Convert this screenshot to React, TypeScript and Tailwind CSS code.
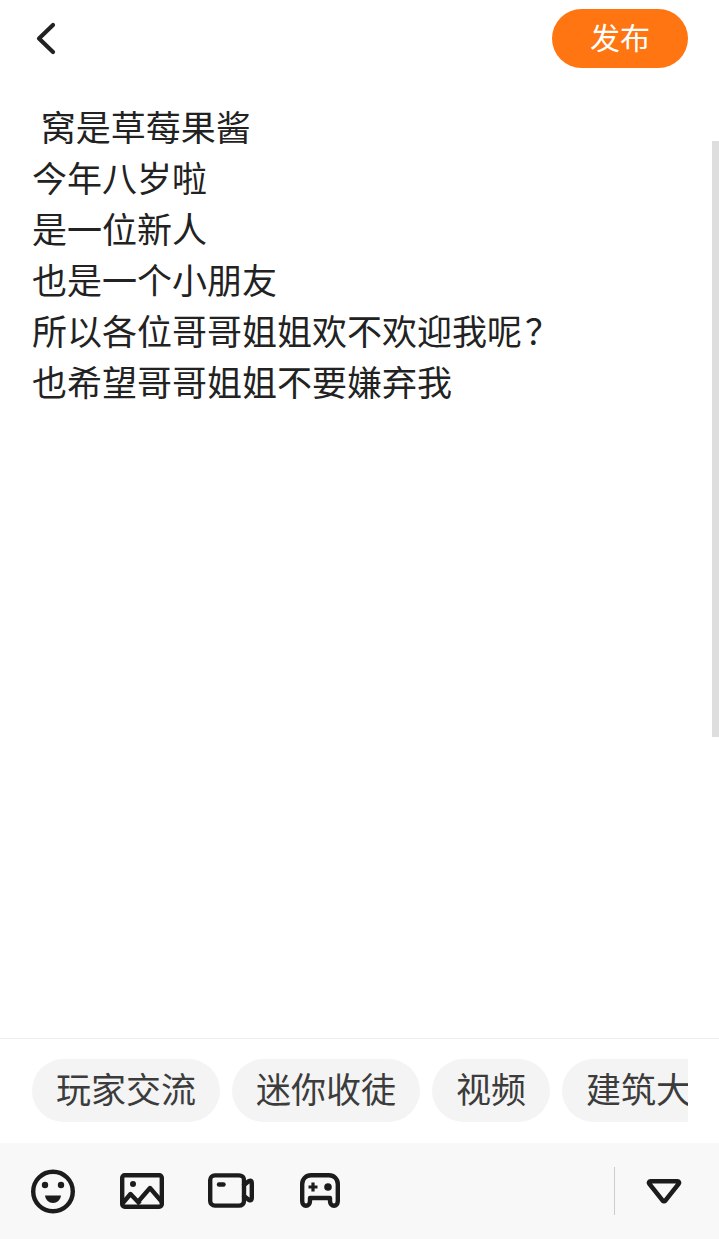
const font = "font-['Roboto','Noto_Sans_CJK_SC',sans-serif]";

const lines = ['\u00a0窝是草莓果酱', '今年八岁啦', '是一位新人', '也是一个小朋友', '所以各位哥哥姐姐欢不欢迎我呢', '也希望哥哥姐姐不要嫌弃我'];
const tags = ['玩家交流', '迷你收徒', '视频', '建筑大师'];

export default function App() {
  return (
    <div className={`relative flex h-[1239px] w-[719px] flex-col overflow-hidden bg-white ${font}`}>
      {/* header */}
      <div className="flex h-[77px] shrink-0 items-start justify-between pl-[32px] pr-[31px] pt-[9px]">
        <svg className="mt-[12px]" width="28" height="36" viewBox="0 0 28 36" fill="none" stroke="#222" strokeWidth="4.2" strokeLinecap="round" strokeLinejoin="round">
          <path d="M21 4L7 17.5L21 31" />
        </svg>
        <button className="flex h-[59px] w-[136px] items-center justify-center rounded-full bg-[#ff7512] text-[30px] text-white">发布</button>
      </div>

      {/* text */}
      <div className="flex-1 px-[32px] pt-[27px] text-[35px] leading-[51px] text-[#222]">
        {lines.map((line, i) => (
          <div key={line} className="whitespace-pre">
            {line}
            {i === 4 && <span className="ml-[3px]">？</span>}
          </div>
        ))}
      </div>

      {/* topic chips */}
      <div className="h-[105px] shrink-0 border-t border-[#eeeeee] pt-[20px]">
        <div className="ml-[32px] mr-[31px] flex gap-[12px] overflow-hidden">
          {tags.map((tag) => (
            <div key={tag} className="flex h-[63px] shrink-0 items-center rounded-full bg-[#f4f4f4] px-[24px] pt-[3px] text-[35px] text-[#3c3c3c]">{tag}</div>
          ))}
        </div>
      </div>

      {/* toolbar */}
      <div className="flex h-[96px] shrink-0 items-center bg-[#f8f8f8] pl-[30px]">
        <div className="flex items-center gap-[43px]">
          <svg width="46" height="46" viewBox="0 0 46 46" fill="none">
            <circle cx="23" cy="23.5" r="19.8" stroke="#1c1c1c" strokeWidth="4.4" />
            <circle cx="15" cy="17" r="3.2" fill="#1c1c1c" />
            <circle cx="31" cy="17" r="3.2" fill="#1c1c1c" />
            <path d="M15 27.5H31C30.5 32 27 35 23 35C19 35 15.5 32 15 27.5Z" fill="#1c1c1c" />
          </svg>
          <svg width="46" height="38" viewBox="0 0 46 38" fill="none" stroke="#1c1c1c" strokeWidth="4.4" strokeLinejoin="round">
            <rect x="3.2" y="3.2" width="39.6" height="31.6" rx="2.5" />
            <circle cx="14" cy="12" r="3" fill="#1c1c1c" stroke="none" />
            <path d="M3 32L11.5 22L21 32M18 31L31 16L43 30" />
          </svg>
          <svg width="46" height="36" viewBox="0 0 46 36" fill="none" stroke="#1c1c1c" strokeWidth="4.4" strokeLinejoin="round" strokeLinecap="round">
            <path d="M7 2.4H31C34 2.4 36 4.4 36 7V28C36 30.6 34 32.6 31 32.6H7C4.2 32.6 2.2 30.6 2.2 28V7C2.2 4.4 4.2 2.4 7 2.4Z" />
            <path d="M36 12L41 8C43 7 43.8 8 43.8 10V25C43.8 27 43 28 41 27L36 23" />
            <path d="M11 11.5H15.5" />
          </svg>
          <svg width="46" height="38" viewBox="0 0 46 38" fill="none" stroke="#1c1c1c" strokeWidth="4.4" strokeLinejoin="round">
            <path d="M14 3.2H32C37 3.2 40.8 7 40.8 12V29C40.8 32 39 33.8 37 33.8C35 33.8 33 32 33 29V26H13V29C13 32 11 33.8 9 33.8C7 33.8 5.2 32 5.2 29V12C5.2 7 9 3.2 14 3.2Z" />
            <path d="M11.5 15H20.5M16 10.5V19.5" strokeWidth="3.2" />
            <circle cx="31" cy="15" r="3.8" fill="#1c1c1c" stroke="none" />
          </svg>
        </div>
        <div className="ml-auto h-[48px] w-px bg-[#cccccc]" />
        <div className="flex w-[104px] items-center justify-center pr-[6px]">
          <svg width="38" height="28" viewBox="0 0 38 28" fill="none" stroke="#1c1c1c" strokeWidth="4.6" strokeLinejoin="round">
            <path d="M5.5 4.3H32.5C33.8 4.3 34.6 5.6 33.8 6.6L20.3 23.6C19.5 24.5 18.5 24.5 17.7 23.6L4.2 6.6C3.4 5.6 4.2 4.3 5.5 4.3Z" />
          </svg>
        </div>
      </div>

      {/* scrollbar */}
      <div className="absolute right-0 top-[141px] h-[596px] w-[7px] bg-[#dedede]" />
    </div>
  );
}
